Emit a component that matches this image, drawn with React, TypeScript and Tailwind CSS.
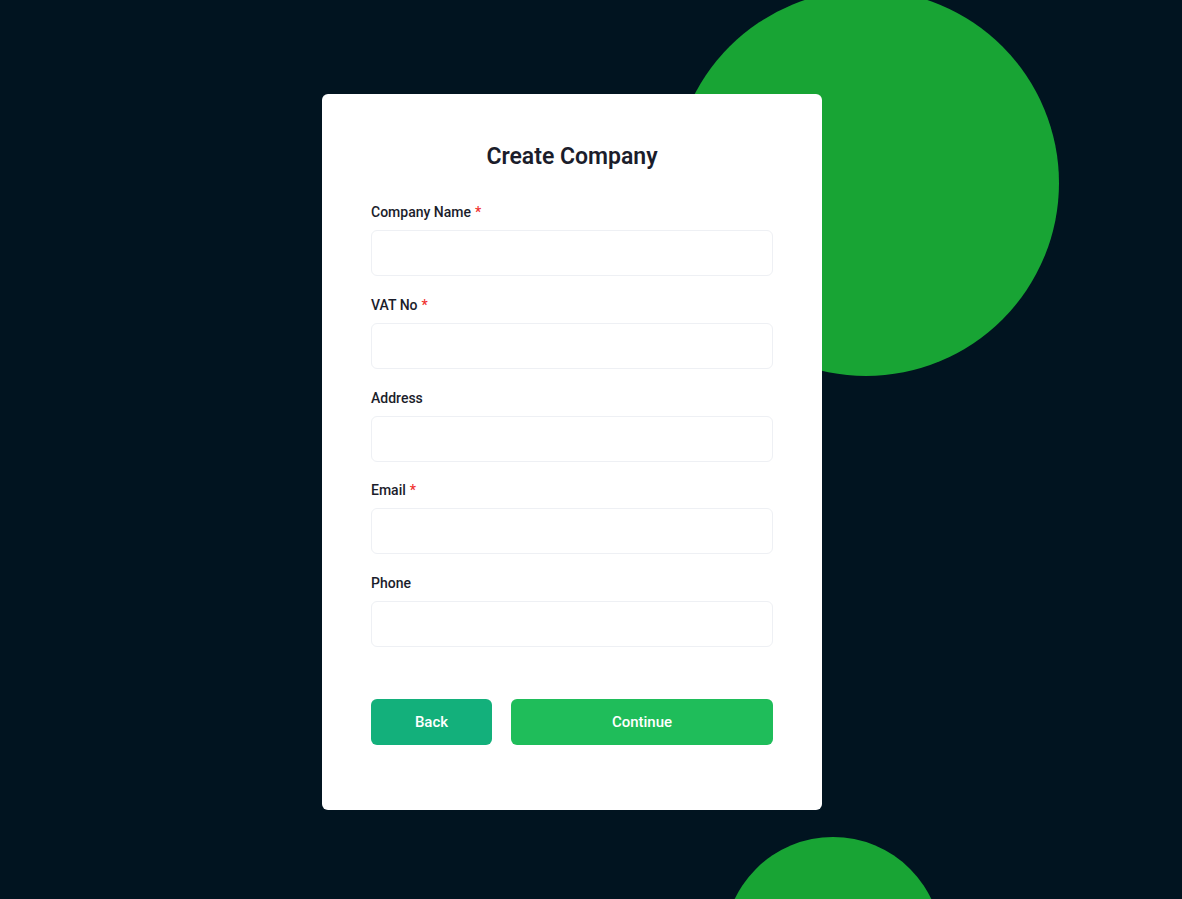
const fields = [
  { label: "Company Name", required: true },
  { label: "VAT No", required: true },
  { label: "Address", required: false },
  { label: "Email", required: true },
  { label: "Phone", required: false },
];

function Field({ label, required }: { label: string; required: boolean }) {
  return (
    <div className="flex flex-col">
      <label className="text-[14px] leading-[20px] font-medium text-[#1b1d2b]">
        {label}
        {required && <span className="ml-1 text-[#f0312f]">*</span>}
      </label>
      <input
        type="text"
        className="mt-2 h-[46px] w-full rounded-md border border-[#eef0f4] bg-white px-3 text-sm outline-none"
      />
    </div>
  );
}

export default function App() {
  return (
    <div
      className="relative min-h-[899px] w-full overflow-hidden bg-[#011420]"
      style={{ fontFamily: "Roboto, 'Liberation Sans', sans-serif" }}
    >
      <div className="absolute left-[673px] top-[-10px] h-[386px] w-[386px] rounded-full bg-[#18a434]" />
      <div className="absolute left-[724px] top-[837px] h-[218px] w-[218px] rounded-full bg-[#18a434]" />

      <div className="relative z-10 pl-[322px] pt-[94px]">
        <div className="w-[500px] rounded-md bg-white px-[49px] pt-[49px] pb-[65px]">
          <h1 className="text-center text-[23px] leading-[28px] font-semibold text-[#1b1d2b]">
            Create Company
          </h1>
          <div className="mt-[31px] flex flex-col gap-[18.75px]">
            {fields.map((f) => (
              <Field key={f.label} label={f.label} required={f.required} />
            ))}
          </div>
          <div className="mt-[52px] flex gap-[19px]">
            <button className="h-[46px] w-[121px] rounded-md bg-[#13b07b] text-[15px] font-medium text-white">
              Back
            </button>
            <button className="h-[46px] flex-1 rounded-md bg-[#1fbd5a] text-[15px] font-medium text-white">
              Continue
            </button>
          </div>
        </div>
      </div>
    </div>
  );
}
